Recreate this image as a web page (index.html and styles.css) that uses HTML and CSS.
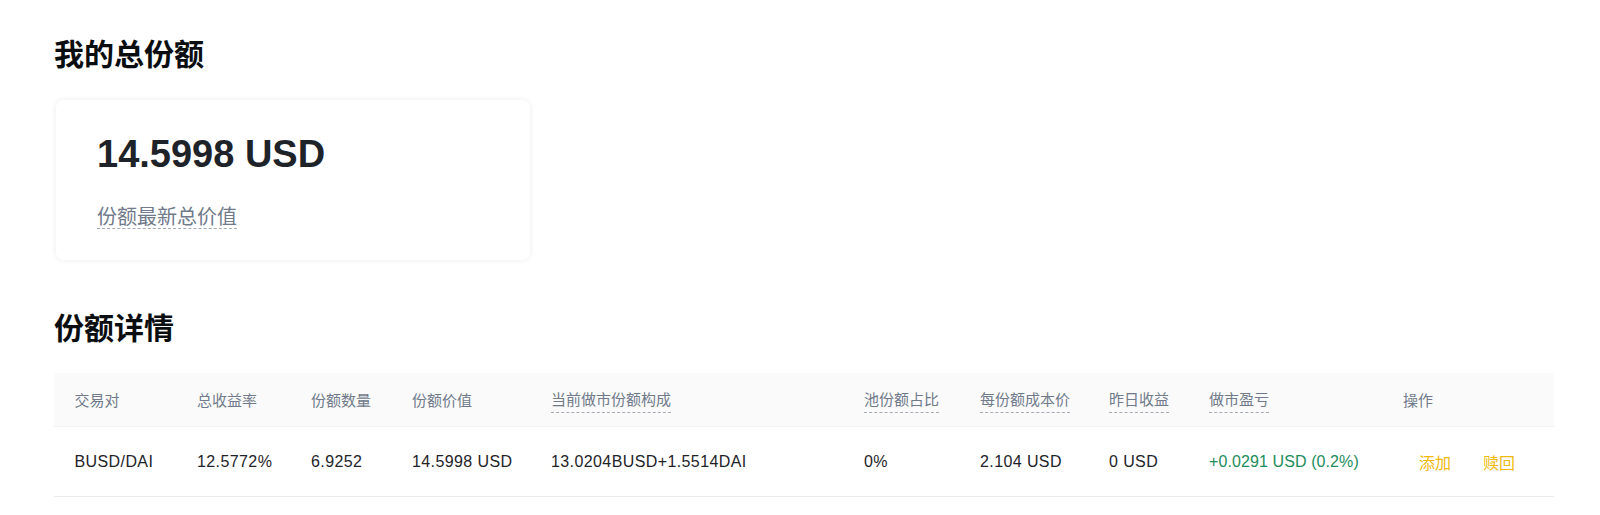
FILE: index.html
```html
<!DOCTYPE html>
<html lang="zh-CN">
<head>
<meta charset="utf-8">
<title>我的总份额</title>
<link rel="stylesheet" href="styles.css">
</head>
<body>
<main class="page">
  <h2 class="section-title">我的总份额</h2>
  <div class="card">
    <div class="card-value">14.5998 USD</div>
    <div class="card-label"><span class="dashed">份额最新总价值</span></div>
  </div>

  <h2 class="section-title section-title--second">份额详情</h2>
  <div class="table">
    <div class="table-row table-head">
      <div class="cell">交易对</div>
      <div class="cell">总收益率</div>
      <div class="cell">份额数量</div>
      <div class="cell">份额价值</div>
      <div class="cell"><span class="dashed">当前做市份额构成</span></div>
      <div class="cell"><span class="dashed">池份额占比</span></div>
      <div class="cell"><span class="dashed">每份额成本价</span></div>
      <div class="cell"><span class="dashed">昨日收益</span></div>
      <div class="cell"><span class="dashed">做市盈亏</span></div>
      <div class="cell">操作</div>
    </div>
    <div class="table-row table-body">
      <div class="cell">BUSD/DAI</div>
      <div class="cell">12.5772%</div>
      <div class="cell">6.9252</div>
      <div class="cell">14.5998 USD</div>
      <div class="cell">13.0204BUSD+1.5514DAI</div>
      <div class="cell">0%</div>
      <div class="cell">2.104 USD</div>
      <div class="cell">0 USD</div>
      <div class="cell positive">+0.0291 USD (0.2%)</div>
      <div class="cell actions">
        <button class="action">添加</button><button class="action">赎回</button>
      </div>
    </div>
  </div>
</main>
</body>
</html>
```

FILE: styles.css
```css
* {
  box-sizing: border-box;
}

html, body {
  margin: 0;
  padding: 0;
  background: #ffffff;
}

body {
  font-family: "Liberation Sans", "Noto Sans CJK SC", sans-serif;
  color: #1e2329;
}

.page {
  padding: 32px 47px 0 54px;
}

.section-title {
  margin: 0;
  font-family: "Noto Sans CJK SC", sans-serif;
  font-size: 30px;
  line-height: 40px;
  font-weight: 700;
  color: #0b0e11;
}

.section-title--second {
  margin-top: 46px;
}

.card {
  margin: 28px 0 0 2px;
  width: 474px;
  height: 160px;
  padding: 29px 0 0 41px;
  border-radius: 8px;
  background: #ffffff;
  box-shadow: 0 0 6px rgba(0, 0, 0, 0.08);
}

.card-value {
  font-family: "Liberation Sans", sans-serif;
  font-weight: 700;
  font-size: 38px;
  line-height: 50px;
  color: #1e2329;
}

.card-label {
  margin-top: 22px;
  font-family: "Noto Sans CJK SC", sans-serif;
  font-size: 20px;
  color: #707a8a;
}

.card-label .dashed {
  line-height: 25px;
}

.dashed {
  display: inline-block;
  border-bottom: 1px dashed #a4abb5;
}

.table {
  margin-top: 27px;
  width: 1500px;
}

.table-row {
  display: grid;
  grid-template-columns: 122.5px 114px 101px 139px 313px 116px 129px 100px 194px 1fr;
  align-items: center;
  padding-left: 20.5px;
}

.table-head {
  height: 53px;
  background: #fafafa;
  font-family: "Noto Sans CJK SC", sans-serif;
  font-size: 15px;
  color: #707a8a;
}

.table-head .cell {
  line-height: 22px;
}

.table-head .dashed {
  line-height: 22px;
  padding-bottom: 2px;
  margin-top: 2px;
}

.table-body {
  height: 71px;
  border-top: 1px solid #f3f3f3;
  border-bottom: 1px solid #eaecef;
  font-size: 16px;
  letter-spacing: 0.4px;
  color: #1e2329;
}

.positive {
  color: #1e8c5b;
  letter-spacing: 0.1px;
}

.actions {
  display: flex;
}

.action {
  padding: 0 16px;
  border: none;
  background: transparent;
  font-family: "Noto Sans CJK SC", sans-serif;
  font-size: 16px;
  line-height: 24px;
  letter-spacing: 0;
  color: #f0b90b;
  cursor: pointer;
}
```
